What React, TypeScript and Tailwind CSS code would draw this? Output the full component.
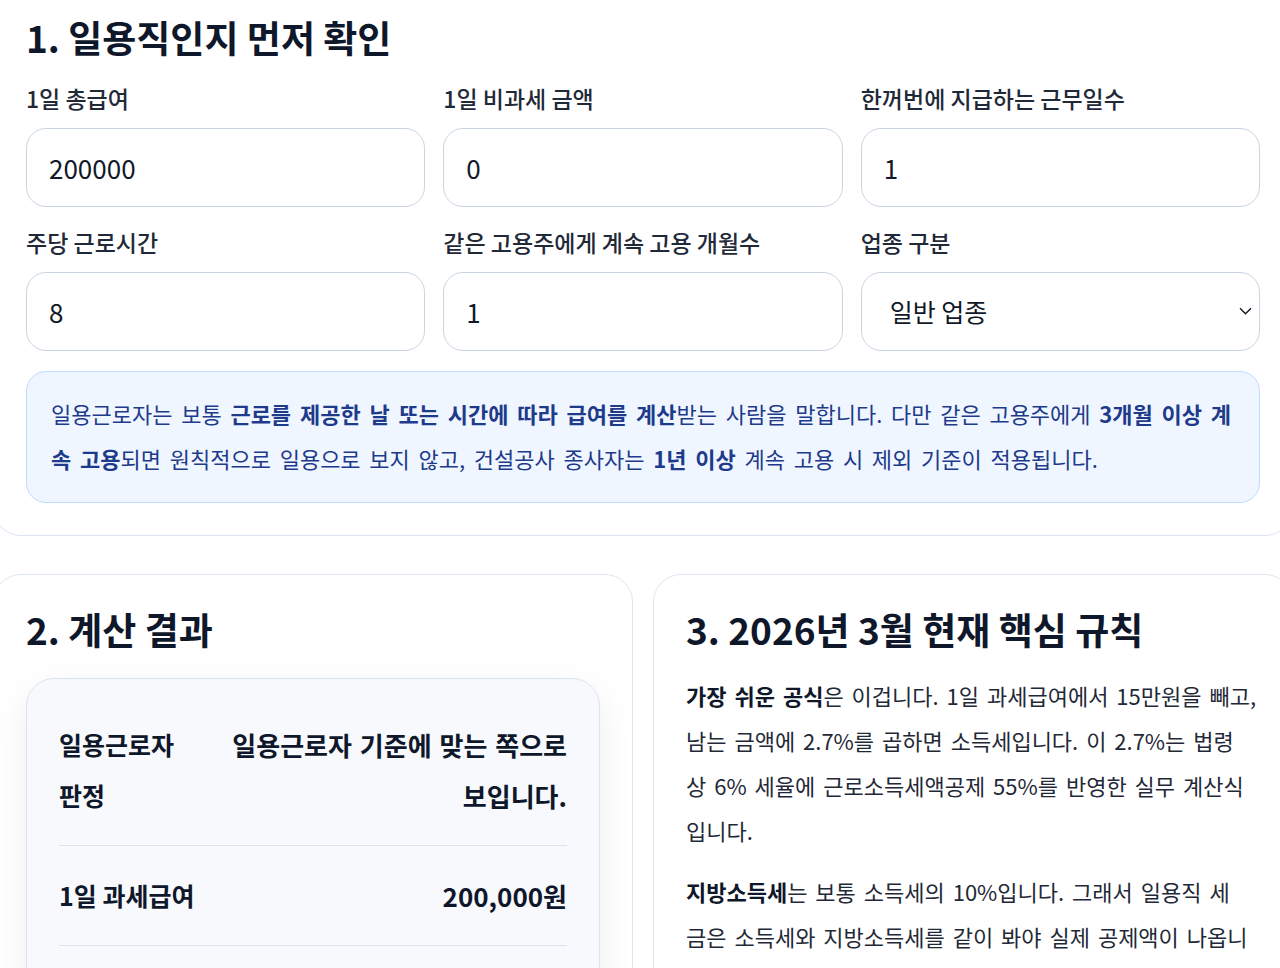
import React from 'react';

const FONT = { fontFamily: '"Noto Sans CJK KR", "Noto Sans", sans-serif' };

interface FieldProps {
  label: string;
  value: string;
}

const Field: React.FC<FieldProps> = ({ label, value }) => (
  <label className="flex flex-col">
    <span className="text-[23px] leading-[30px] font-medium text-[#1f2937] mb-[15px]">{label}</span>
    <input
      readOnly
      value={value}
      className="h-[79px] w-full rounded-[20px] border border-[#cbd5e1] bg-white px-[22px] text-[26px] text-[#111827] outline-none"
      style={FONT}
    />
  </label>
);

const SelectField: React.FC<FieldProps> = ({ label, value }) => (
  <label className="flex flex-col">
    <span className="text-[23px] leading-[30px] font-medium text-[#1f2937] mb-[15px]">{label}</span>
    <div className="relative">
      <select
        defaultValue={value}
        className="h-[79px] w-full appearance-none rounded-[20px] border border-[#cbd5e1] bg-white pl-[28px] pr-12 text-[25px] text-[#111827] outline-none"
        style={FONT}
      >
        <option>일반 업종</option>
        <option>건설공사 종사자</option>
      </select>
      <svg
        className="pointer-events-none absolute right-[8px] top-[35px] h-[8px] w-[13px]"
        viewBox="0 0 13 8"
        fill="none"
        stroke="#111827"
        strokeWidth={1.4}
      >
        <path d="M1 1.2l5.5 5.5L12 1.2" />
      </svg>
    </div>
  </label>
);

const ResultRow: React.FC<{ label: string; value: string; last?: boolean }> = ({ label, value, last }) => (
  <div className={`flex gap-6 py-6 ${last ? '' : 'border-b border-[#dbe3ee]'}`}>
    <div className="shrink-0 max-w-[140px] text-[25px] leading-[51px] font-bold text-[#0f172a]">{label}</div>
    <div className="flex-1 text-right text-[26px] leading-[51px] font-bold [word-spacing:2px] text-[#0f172a]">
      {value}
    </div>
  </div>
);

export default function App() {
  return (
    <div className="w-[1280px] h-[968px] overflow-hidden bg-white" style={FONT}>
      <div className="w-[1300px] -ml-[7px] -mt-[18px]">
        {/* 1. 입력 */}
        <section className="rounded-[28px] border border-[#dde5f0] bg-white p-8">
          <h2 className="text-[37px] leading-[44px] font-bold text-[#0f172a] mb-[24px]">1. 일용직인지 먼저 확인</h2>
          <div className="grid grid-cols-3 gap-x-[18px] gap-y-5">
            <Field label="1일 총급여" value="200000" />
            <Field label="1일 비과세 금액" value="0" />
            <Field label="한꺼번에 지급하는 근무일수" value="1" />
            <Field label="주당 근로시간" value="8" />
            <Field label="같은 고용주에게 계속 고용 개월수" value="1" />
            <SelectField label="업종 구분" value="일반 업종" />
          </div>
          <div className="mt-5 rounded-[20px] border border-[#bfdbfe] bg-[#eff6ff] px-6 pt-[19px] pb-[21px] text-[22px] leading-[45px] [word-spacing:3.8px] text-[#1e3a8a]">
            일용근로자는 보통 <b>근로를 제공한 날 또는 시간에 따라 급여를 계산</b>받는 사람을 말합니다. 다만 같은 고용주에게{' '}
            <b>
              3개월 이상 계<br />속 고용
            </b>
            되면 원칙적으로 일용으로 보지 않고, 건설공사 종사자는 <b>1년 이상</b> 계속 고용 시 제외 기준이 적용됩니다.
          </div>
        </section>

        <div className="mt-[38px] grid grid-cols-2 gap-5">
          {/* 2. 계산 결과 */}
          <section className="rounded-[28px] border border-[#dde5f0] bg-white p-8">
            <h2 className="text-[37px] leading-[44px] font-bold text-[#0f172a] mb-[27px]">2. 계산 결과</h2>
            <div className="rounded-[28px] border border-[#dbe3f0] bg-[#f7f9fd] px-8 pt-[16px] pb-4 shadow-[0_12px_36px_rgba(15,23,42,0.07)]">
              <ResultRow label="일용근로자 판정" value="일용근로자 기준에 맞는 쪽으로 보입니다." />
              <ResultRow label="1일 과세급여" value="200,000원" />
              <ResultRow label="1일 소득세" value="1,350원" />
              <ResultRow label="1일 지방소득세" value="130원" last />
            </div>
          </section>

          {/* 3. 핵심 규칙 */}
          <section className="rounded-[28px] border border-[#dde5f0] bg-white p-8">
            <h2 className="text-[37px] leading-[44px] font-bold text-[#0f172a] mb-[22px]">3. 2026년 3월 현재 핵심 규칙</h2>
            <div className="text-[22px] leading-[45px] [word-spacing:3px] text-[#1f2937]">
              <p className="mb-4">
                <b className="text-[#0f172a]">가장 쉬운 공식</b>은 이겁니다. 1일 과세급여에서 15만원을 빼고,
                <br />
                남는 금액에 2.7%를 곱하면 소득세입니다. 이 2.7%는 법령
                <br />
                상 6% 세율에 근로소득세액공제 55%를 반영한 실무 계산식
                <br />
                입니다.
              </p>
              <p className="mb-4">
                <b className="text-[#0f172a]">지방소득세</b>는 보통 소득세의 10%입니다. 그래서 일용직 세
                <br />
                금은 소득세와 지방소득세를 같이 봐야 실제 공제액이 나옵니
                <br />
                다.
              </p>
              <p>
                <b className="text-[#0f172a]">소액부징수</b> 규정에 따라 소득세가 1,000원 미만이면 원천징수하지 않습니다.
              </p>
            </div>
          </section>
        </div>
      </div>
    </div>
  );
}
